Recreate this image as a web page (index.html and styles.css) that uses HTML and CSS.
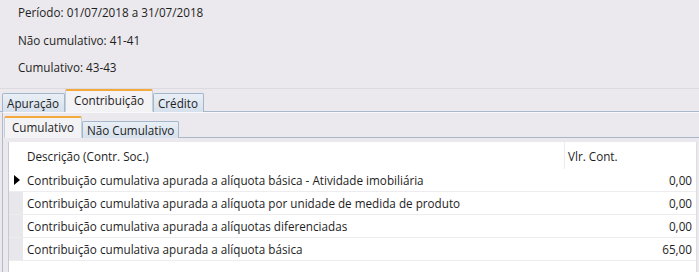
FILE: index.html
```html
<!DOCTYPE html>
<html lang="pt-BR">
<head>
    <meta charset="UTF-8">
    <title>Apuração PIS/COFINS</title>
    <link rel="stylesheet" href="styles.css">
</head>
<body>
    <div class="info">
        <p>Período: 01/07/2018 a 31/07/2018</p>
        <p>Não cumulativo: 41-41</p>
        <p>Cumulativo: 43-43</p>
    </div>
    <div class="tabs outer">
        <span class="tab">Apuração</span>
        <span class="tab active">Contribuição</span>
        <span class="tab">Crédito</span>
    </div>
    <div class="page">
        <div class="tabs inner">
            <span class="tab active">Cumulativo</span>
            <span class="tab">Não Cumulativo</span>
        </div>
        <div class="grid">
            <div class="row head">
                <div class="ind"></div>
                <div class="desc">Descrição (Contr. Soc.)</div>
                <div class="val">Vlr. Cont.</div>
            </div>
            <div class="row current">
                <div class="ind"><span class="arrow"></span></div>
                <div class="desc">Contribuição cumulativa apurada a alíquota básica - Atividade imobiliária</div>
                <div class="val">0,00</div>
            </div>
            <div class="row">
                <div class="ind"></div>
                <div class="desc">Contribuição cumulativa apurada a alíquota por unidade de medida de produto</div>
                <div class="val">0,00</div>
            </div>
            <div class="row">
                <div class="ind"></div>
                <div class="desc">Contribuição cumulativa apurada a alíquotas diferenciadas</div>
                <div class="val">0,00</div>
            </div>
            <div class="row">
                <div class="ind"></div>
                <div class="desc">Contribuição cumulativa apurada a alíquota básica</div>
                <div class="val">65,00</div>
            </div>
        </div>
    </div>
</body>
</html>
```

FILE: styles.css
```css
body {
    margin: 0;
    background-color: #ebe9ed;
    font-family: 'Open Sans', 'Noto Sans', sans-serif;
    font-size: 11.7px;
    color: #1e1e1e;
    height: 272px;
    overflow: hidden;
}

/* Header with period info */
.info {
    height: 86px;
    padding-top: 2px;
    padding-left: 18px;
    border-bottom: 1px solid #dcdadf;
}

.info p {
    margin: 0 0 7.5px 0;
    line-height: 20px;
}

/* Tabs */
.tabs {
    display: flex;
    align-items: flex-end;
    border-bottom: 1px solid #a9b8c9;
}

.tab {
    height: 18px;
    line-height: 18px;
    padding: 0 4px;
    margin-bottom: -1px;
    background: linear-gradient(#e9eff6, #d6e1ed);
    border: 1px solid #a4b6c9;
    border-bottom: none;
    border-radius: 2px 2px 0 0;
    color: #1e1e1e;
}

.tab.active {
    height: 20px;
    padding: 0 8px;
    background: #f3f2f5;
    border-color: #c6ced8;
    border-top: 2px solid #f3a93c;
    border-bottom: 1px solid #f3f2f5;
}

.outer {
    height: 22px;
    padding-left: 2px;
}

.outer .tab {
    padding: 0 5px 0 4px;
}

.outer .tab.active {
    padding: 0 8px;
}

.page {
    margin-left: 2px;
    border-left: 1px solid #aebccb;
    border-top: 1px solid #f8f8fa;
    padding: 4px 0 0 1px;
}

.inner {
    height: 20px;
}

.inner .tab {
    height: 16px;
    line-height: 16px;
}

.inner .tab.active {
    height: 19px;
    line-height: 19px;
    padding: 0 7px;
}

/* Grid */
.grid {
    margin: 4px 2px 0 4px;
    background: #fff;
    border-left: 1px solid #c9c9cf;
    border-right: 1px solid #dedede;
    height: 140px;
}

.row {
    display: flex;
    height: 22px;
    line-height: 22px;
    border-bottom: 1px solid #ededef;
}

.row .ind {
    width: 14px;
    background: #e8e7ec;
    display: flex;
    align-items: center;
    justify-content: center;
}

.row.head {
    height: 27px;
    line-height: 28px;
    border-bottom: none;
}

.row.head .ind,
.row.current .ind {
    background: #fff;
}

.desc {
    flex: 1;
    padding-left: 4px;
    white-space: nowrap;
}

.val {
    width: 124px;
    padding-right: 4px;
    text-align: right;
}

.head .val {
    text-align: left;
    padding-left: 3px;
    border-left: 1px solid #ececee;
}

.arrow {
    width: 0;
    height: 0;
    border-top: 5px solid transparent;
    border-bottom: 5px solid transparent;
    border-left: 6px solid #000;
    margin-left: 2px;
}
```
